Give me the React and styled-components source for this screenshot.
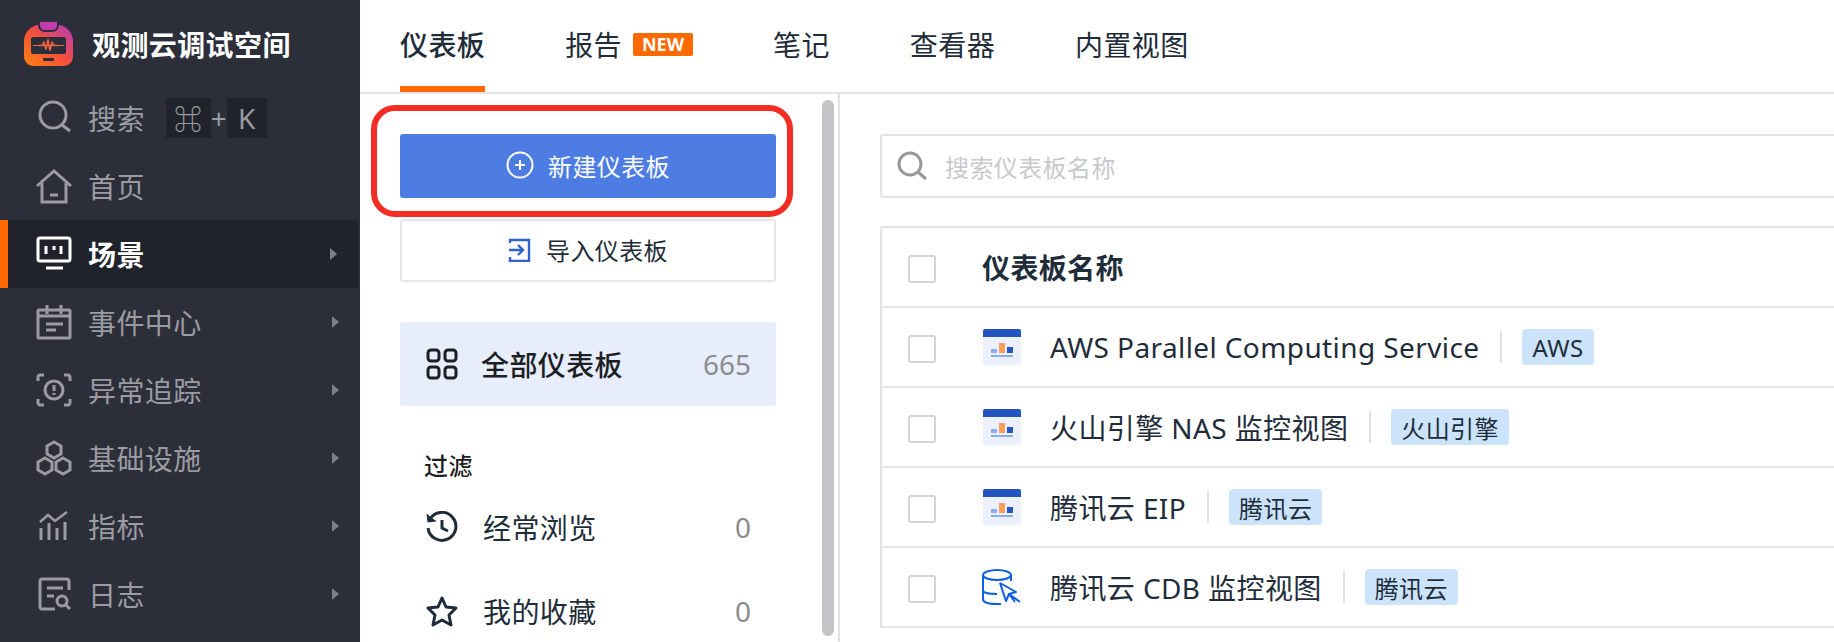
import React from 'react'
import styled, { createGlobalStyle } from 'styled-components'

const GlobalStyle = createGlobalStyle`
  html, body {
    margin: 0;
    height: 100%;
    overflow: hidden;
    background: #fff;
    font-family: "Noto Sans", "Noto Sans CJK SC", sans-serif;
    letter-spacing: 0.4px;
  }
  * { box-sizing: border-box; }
`

const Page = styled.div`
  display: grid;
  grid-template-columns: 360px 1fr;
  width: 1834px;
  height: 642px;
  overflow: hidden;
`

const Sidebar = styled.aside`
  background: #2c2e3a;
  color: #9a9ca2;
  overflow: hidden;
`

const Brand = styled.div`
  display: flex;
  align-items: center;
  gap: 19px;
  height: 84px;
  padding: 3px 0 0 24px;
  color: #fff;
  font-size: 28px;
  font-weight: 700;
`

const NavItem = styled.div`
  display: flex;
  align-items: center;
  height: 68px;
  padding: 0 21px 0 ${({ $active }) => ($active ? '29px' : '37px')};
  font-size: 28px;
  font-weight: ${({ $active }) => ($active ? 700 : 400)};
  color: ${({ $active }) => ($active ? '#fff' : '#9a9ca2')};
  background: ${({ $active }) => ($active ? '#20232b' : 'transparent')};
  border-left: ${({ $active }) => ($active ? '8px solid #ff6a00' : 'none')};
  margin-right: ${({ $active }) => ($active ? '2px' : '0')};
`

const NavIcon = styled.svg`
  width: 36px;
  height: 36px;
  margin: 0 16px 0 -1px;
  flex: none;
  fill: none;
  stroke: currentColor;
  stroke-width: 3;
`

const NavLabel = styled.span`
  flex: 1;
`

const Shortcut = styled.span`
  display: flex;
  align-items: center;
  margin-left: 21px;
  font-size: 28px;
`

const Key = styled.span`
  display: flex;
  align-items: center;
  justify-content: center;
  width: ${({ $w }) => $w}px;
  height: 40px;
  background: #20232b;
`

const Plus = styled.span`
  width: 16px;
  text-align: center;
`

const Caret = styled.span`
  width: 0;
  height: 0;
  border-left: 7px solid #7e8087;
  border-top: 6px solid transparent;
  border-bottom: 6px solid transparent;
`

const Main = styled.main`
  display: flex;
  flex-direction: column;
  min-width: 0;
`

const Tabs = styled.nav`
  display: flex;
  gap: 80px;
  height: 94px;
  padding-left: 40px;
  border-bottom: 2px solid #e2e2e8;
  flex: none;
`

const Tab = styled.div`
  display: flex;
  align-items: center;
  gap: 11px;
  height: 92px;
  padding-top: 2px;
  font-size: 28px;
  font-weight: ${({ $active }) => ($active ? 500 : 400)};
  color: #1f2d3a;
  border-bottom: 6px solid ${({ $active }) => ($active ? '#ff6a00' : 'transparent')};
`

const NewBadge = styled.span`
  display: flex;
  align-items: center;
  justify-content: center;
  width: 60px;
  height: 23px;
  border-radius: 2px;
  background: #ff6a00;
  color: #fff;
  font-size: 18px;
  font-weight: 700;
  letter-spacing: 0;
`

const Body = styled.div`
  display: flex;
  flex: 1;
  min-height: 0;
`

const LeftPanel = styled.section`
  position: relative;
  flex: none;
  width: 480px;
  padding: 40px 0 0 40px;
  border-right: 2px solid #e2e2e8;
`

const Highlight = styled.div`
  position: absolute;
  left: 11px;
  top: 11px;
  width: 422px;
  height: 112px;
  border: 6px solid #f32c24;
  border-radius: 24px;
`

const Scrollbar = styled.div`
  position: absolute;
  left: 462px;
  top: 6px;
  width: 12px;
  height: 536px;
  border-radius: 6px;
  background: #c4c4c6;
`

const Button = styled.div`
  display: flex;
  align-items: center;
  justify-content: center;
  gap: 14px;
  width: 376px;
  height: ${({ $primary }) => ($primary ? 64 : 63)}px;
  margin-bottom: ${({ $primary }) => ($primary ? 21 : 40)}px;
  padding-bottom: 2px;
  border-radius: 3px;
  font-size: 24px;
  color: ${({ $primary }) => ($primary ? '#fff' : '#1f2d3a')};
  background: ${({ $primary }) => ($primary ? '#4d7de3' : '#fff')};
  border: ${({ $primary }) => ($primary ? 'none' : '2px solid #e4e4ea')};
`

const AllRow = styled.div`
  display: flex;
  align-items: center;
  width: 376px;
  height: 84px;
  padding: 0 25px 0 26px;
  border-radius: 3px;
  background: #e8edfc;
  color: #1c1f24;
  font-size: 28px;
  font-weight: 500;
`

const RowLabel = styled.span`
  flex: 1;
  margin-left: ${({ $gap }) => $gap}px;
`

const Count = styled.span`
  color: #8a8c90;
  font-weight: 400;
  letter-spacing: 0;
`

const FilterTitle = styled.div`
  margin: 42px 0 0 24px;
  height: 37px;
  line-height: 36px;
  font-size: 24px;
  font-weight: 500;
  color: #1c1f24;
`

const FilterRow = styled.div`
  display: flex;
  align-items: center;
  width: 376px;
  height: 84px;
  padding: 0 25px 0 26px;
  font-size: 28px;
  color: #1f2d3a;
`

const RightPanel = styled.section`
  flex: 1;
  min-width: 0;
  padding: 40px 0 0 40px;
`

const SearchBox = styled.div`
  display: flex;
  align-items: center;
  gap: 18px;
  height: 64px;
  padding: 0 0 0 15px;
  border: 2px solid #e2e2e8;
  border-right: none;
  border-radius: 3px 0 0 3px;
  font-size: 24px;
  color: #c9c9cb;
`

const Table = styled.div`
  margin-top: 28px;
  border-top: 2px solid #e2e2e8;
  border-left: 2px solid #e2e2e8;
  border-radius: 3px 0 0 0;
`

const TableRow = styled.div`
  display: flex;
  align-items: center;
  height: 80px;
  padding-left: 26px;
  border-bottom: 2px solid #e6e6ea;
  font-size: 28px;
  color: #1f2d3a;
`

const Checkbox = styled.span`
  flex: none;
  width: 28px;
  height: 28px;
  margin: 4px 47px 0 0;
  border: 2px solid #d4d4d4;
  border-radius: 3px;
  background: #fff;
`

const HeaderCell = styled.span`
  margin-left: -1px;
  font-weight: 700;
`

const RowName = styled.span`
  margin-left: 29px;
`

const Divider = styled.span`
  width: 2px;
  height: 32px;
  margin: 0 20px 0 21px;
  background: #e0e0e6;
`

const Tag = styled.span`
  display: flex;
  align-items: center;
  height: 36px;
  padding: 0 10px;
  border-radius: 4px;
  background: #cbe3fb;
  font-size: 24px;
`

const DbSvg = styled.svg`
  flex: none;
  width: 40px;
  height: 36px;
  margin: 0 -1px;
  fill: none;
  stroke: #0f5ee0;
  stroke-width: 2;
`

const Logo = () => (
  <svg width="49" height="44" viewBox="0 0 49 44">
    <defs>
      <linearGradient id="logoFill" x1="0" y1="1" x2="1" y2="0">
        <stop offset="0" stopColor="#ff8210" />
        <stop offset="0.5" stopColor="#f5503c" />
        <stop offset="1" stopColor="#b43ac0" />
      </linearGradient>
    </defs>
    <path d="M13 3h23c7 2 13 8 13 16v15c0 6-4 10-10 10H10C4 44 0 40 0 34V19C0 11 6 5 13 3z" fill="url(#logoFill)" />
    <path d="M15 0v3c0 4 3 6 6 6h7c3 0 6-2 6-6V0" fill="#c23cae" stroke="#2c2e3a" strokeWidth="2" />
    <rect x="7" y="15" width="35" height="17" rx="2" fill="#2c2e3a" />
    <path d="M9 23.5h31" stroke="#f0623c" strokeWidth="1" />
    <path d="M14 23.5h4l2-3 2 7 2-10 2 11 2-8 2 3h4" fill="none" stroke="#f0623c" strokeWidth="1.6" />
    <rect x="19" y="36" width="11" height="3" rx="1" fill="#2c2e3a" />
  </svg>
)

const navIcons = {
  search: (
    <>
      <circle cx="17" cy="15" r="13" />
      <path d="M26 25l8 6" />
    </>
  ),
  home: (
    <>
      <path d="M1 18L18 3l17 15" />
      <path d="M6 15v19h24V15" />
      <path d="M14 27h8" />
    </>
  ),
  scene: (
    <>
      <rect x="2" y="2" width="32" height="23" rx="2" />
      <path d="M10 10v8M18 10v4M25 10v8" />
      <path d="M10 32h17" />
    </>
  ),
  event: (
    <>
      <rect x="2" y="6" width="32" height="28" rx="1" />
      <path d="M11 1v9M25 1v9M2 12h32M10 20h17M10 26h10" />
    </>
  ),
  anomaly: (
    <>
      <path d="M2 9V5c0-1 1-2 2-2h4M28 3h4c1 0 2 1 2 2v4M2 27v4c0 1 1 2 2 2h4M28 33h4c1 0 2-1 2-2v-4" />
      <circle cx="18" cy="18" r="9" />
      <path d="M18 13v6M18 21v2" />
    </>
  ),
  infra: (
    <>
      <path d="M18 2l7 4v8l-7 4-7-4V6z" />
      <path d="M9 18l7 4v8l-7 4-7-4v-8z" />
      <path d="M27 18l7 4v8l-7 4-7-4v-8z" />
    </>
  ),
  metric: (
    <>
      <path d="M4 14l8-7 7 6 12-9" strokeWidth="2.5" />
      <path d="M5 32V20M13 32V15M21 32V20M29 32V14" />
    </>
  ),
  log: (
    <>
      <path d="M33 14V5c0-1-1-2-2-2H6C5 3 4 4 4 5v26c0 1 1 2 2 2h13" />
      <path d="M11 12h16M11 20h7" />
      <circle cx="26" cy="25" r="5" />
      <path d="M30 29l4 4" />
    </>
  ),
}

const navItems = [
  { icon: 'home', label: '首页' },
  { icon: 'scene', label: '场景', active: true, caret: true },
  { icon: 'event', label: '事件中心', caret: true },
  { icon: 'anomaly', label: '异常追踪', caret: true },
  { icon: 'infra', label: '基础设施', caret: true },
  { icon: 'metric', label: '指标', caret: true },
  { icon: 'log', label: '日志', caret: true },
]

const PanelIcon = () => (
  <svg width="38" height="36" viewBox="0 0 38 36">
    <rect width="38" height="36" rx="2" fill="#ebf0fc" />
    <path d="M2 0h34a2 2 0 0 1 2 2v6H0V2a2 2 0 0 1 2-2z" fill="#2354c0" />
    <rect x="8" y="20" width="6" height="4" fill="#8aa9ee" />
    <rect x="16" y="14" width="6" height="10" fill="#fc9d5c" />
    <rect x="24" y="18" width="6" height="6" fill="#2354c0" />
    <rect x="8" y="26" width="22" height="2" fill="#8aa9ee" />
  </svg>
)

const DbIcon = () => (
  <DbSvg viewBox="0 0 40 36">
    <ellipse cx="15" cy="6" rx="14" ry="5" />
    <path d="M1 6v24c0 3 5 5 14 5h4M1 22c1 2 7 3 14 3M29 6v6" />
    <path d="M18 14l6 18 3-7 6 8M18 14l16 9-7 2 11 8" strokeLinejoin="round" />
  </DbSvg>
)

const rows = [
  { name: 'AWS Parallel Computing Service', tag: 'AWS', icon: <PanelIcon /> },
  { name: '火山引擎 NAS 监控视图', tag: '火山引擎', icon: <PanelIcon /> },
  { name: '腾讯云 EIP', tag: '腾讯云', icon: <PanelIcon /> },
  { name: '腾讯云 CDB 监控视图', tag: '腾讯云', icon: <DbIcon /> },
]

const App = () => {
  return (
    <Page>
      <GlobalStyle />
      <Sidebar>
        <Brand>
          <Logo />
          观测云调试空间
        </Brand>
        <NavItem>
          <NavIcon viewBox="0 0 36 36">{navIcons.search}</NavIcon>
          <span>搜索</span>
          <Shortcut>
            <Key $w={45}>⌘</Key>
            <Plus>+</Plus>
            <Key $w={40}>K</Key>
          </Shortcut>
        </NavItem>
        {navItems.map((item) => (
          <NavItem key={item.label} $active={item.active}>
            <NavIcon viewBox="0 0 36 36">{navIcons[item.icon]}</NavIcon>
            <NavLabel>{item.label}</NavLabel>
            {item.caret && <Caret />}
          </NavItem>
        ))}
      </Sidebar>
      <Main>
        <Tabs>
          <Tab $active>仪表板</Tab>
          <Tab>
            报告
            <NewBadge>NEW</NewBadge>
          </Tab>
          <Tab>笔记</Tab>
          <Tab>查看器</Tab>
          <Tab>内置视图</Tab>
        </Tabs>
        <Body>
          <LeftPanel>
            <Button $primary>
              <svg width="28" height="28" viewBox="0 0 28 28" fill="none" stroke="#fff" strokeWidth="2">
                <circle cx="14" cy="14" r="12.5" />
                <path d="M14 9v10M9 14h10" />
              </svg>
              新建仪表板
            </Button>
            <Button>
              <svg width="24" height="24" viewBox="0 0 24 24" fill="none" stroke="#2f62d0" strokeWidth="2.4">
                <path d="M2 5V2h19v21H2v-4" />
                <path d="M1 12h13M10 7l5 5-5 5" />
              </svg>
              导入仪表板
            </Button>
            <AllRow>
              <svg width="32" height="32" viewBox="0 0 32 32" fill="none" stroke="#1c1f24" strokeWidth="3">
                <rect x="2" y="2" width="11" height="11" rx="3" />
                <rect x="19" y="2" width="11" height="11" rx="3" />
                <rect x="2" y="19" width="11" height="11" rx="3" />
                <rect x="19" y="19" width="11" height="11" rx="3" />
              </svg>
              <RowLabel $gap={23}>全部仪表板</RowLabel>
              <Count>665</Count>
            </AllRow>
            <FilterTitle>过滤</FilterTitle>
            <FilterRow>
              <svg width="32" height="32" viewBox="0 0 32 32" fill="none" stroke="#1f2d3a" strokeWidth="3">
                <path d="M4 8a14 14 0 1 1-2 9" />
                <path d="M1 3l1 8 8-1" fill="#1f2d3a" strokeWidth="1" />
                <path d="M16 9v8l6 3" />
              </svg>
              <RowLabel $gap={25}>经常浏览</RowLabel>
              <Count>0</Count>
            </FilterRow>
            <FilterRow>
              <svg width="32" height="32" viewBox="0 0 32 32" fill="none" stroke="#1f2d3a" strokeWidth="3" strokeLinejoin="round">
                <path d="M16 3l4 9 10 1-7 7 2 10-9-5-9 5 2-10-7-7 10-1z" />
              </svg>
              <RowLabel $gap={25}>我的收藏</RowLabel>
              <Count>0</Count>
            </FilterRow>
            <Highlight />
            <Scrollbar />
          </LeftPanel>
          <RightPanel>
            <SearchBox>
              <svg width="30" height="30" viewBox="0 0 30 30" fill="none" stroke="#96989e" strokeWidth="3">
                <circle cx="13" cy="13" r="11" />
                <path d="M21 21l8 7" />
              </svg>
              搜索仪表板名称
            </SearchBox>
            <Table>
              <TableRow>
                <Checkbox />
                <HeaderCell>仪表板名称</HeaderCell>
              </TableRow>
              {rows.map((row) => (
                <TableRow key={row.name}>
                  <Checkbox />
                  {row.icon}
                  <RowName>{row.name}</RowName>
                  <Divider />
                  <Tag>{row.tag}</Tag>
                </TableRow>
              ))}
            </Table>
          </RightPanel>
        </Body>
      </Main>
    </Page>
  )
}

export default App
